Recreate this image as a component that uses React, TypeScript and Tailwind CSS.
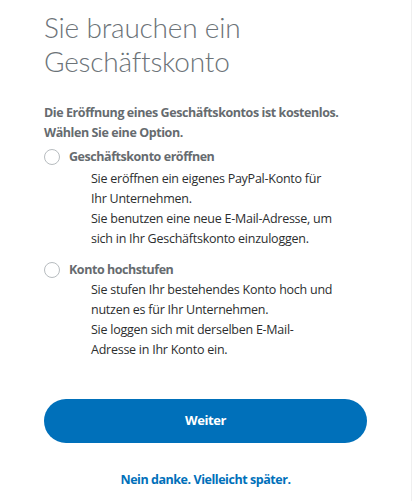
import React from "react";

function Radio() {
  return (
    <span className="block w-4 h-4 rounded-full border border-[#b7bcbf] bg-white shrink-0" />
  );
}

export default function App() {
  return (
    <div className="w-[412px] h-[501px] bg-white border-r border-[#f0f0f0] font-['Open_Sans',sans-serif]">
      <div className="pl-[44px] pr-[45px] pt-[10px]">
        <h1 className="text-[28px] leading-[34px] font-light text-[#6c7378] font-['Lato',sans-serif] tracking-[-0.2px]">
          Sie brauchen ein
          <br />
          Geschäftskonto
        </h1>
        <p className="mt-[25px] text-[12.5px] leading-[20px] font-bold text-[#666b6f] tracking-[-0.42px]">
          Die Eröffnung eines Geschäftskontos ist kostenlos.
          <br />
          Wählen Sie eine Option.
        </p>
        <div className="mt-[4px] flex flex-col gap-[11px]">
          <div>
            <div className="flex items-center gap-[9px] h-[20px]">
              <Radio />
              <span className="text-[12.5px] font-bold text-[#666b6f] tracking-[-0.45px]">Geschäftskonto eröffnen</span>
            </div>
            <p className="pt-[2px] pl-[47px] text-[12.5px] leading-[20px] text-[#2c2e2f] tracking-[-0.25px]">
              Sie eröffnen ein eigenes PayPal-Konto für
              <br />
              Ihr Unternehmen.
              <br />
              Sie benutzen eine neue E-Mail-Adresse, um
              <br />
              sich in Ihr Geschäftskonto einzuloggen.
            </p>
          </div>
          <div>
            <div className="flex items-center gap-[9px] h-[20px]">
              <Radio />
              <span className="text-[12.5px] font-bold text-[#666b6f] tracking-[-0.45px]">Konto hochstufen</span>
            </div>
            <p className="pl-[47px] text-[12.5px] leading-[20px] text-[#2c2e2f] tracking-[-0.25px]">
              Sie stufen Ihr bestehendes Konto hoch und
              <br />
              nutzen es für Ihr Unternehmen.
              <br />
              Sie loggen sich mit derselben E-Mail-
              <br />
              Adresse in Ihr Konto ein.
            </p>
          </div>
        </div>
        <button className="block mt-[39px] w-[323px] h-[44px] rounded-full bg-[#0070ba] text-white text-[13px] font-bold tracking-[-0.4px]">
          Weiter
        </button>
        <div className="w-[323px] mt-[25px] text-center leading-[20px]">
          <span className="text-[12.5px] font-bold text-[#0070ba] tracking-[-0.45px]">Nein danke. Vielleicht später.</span>
        </div>
      </div>
    </div>
  );
}
